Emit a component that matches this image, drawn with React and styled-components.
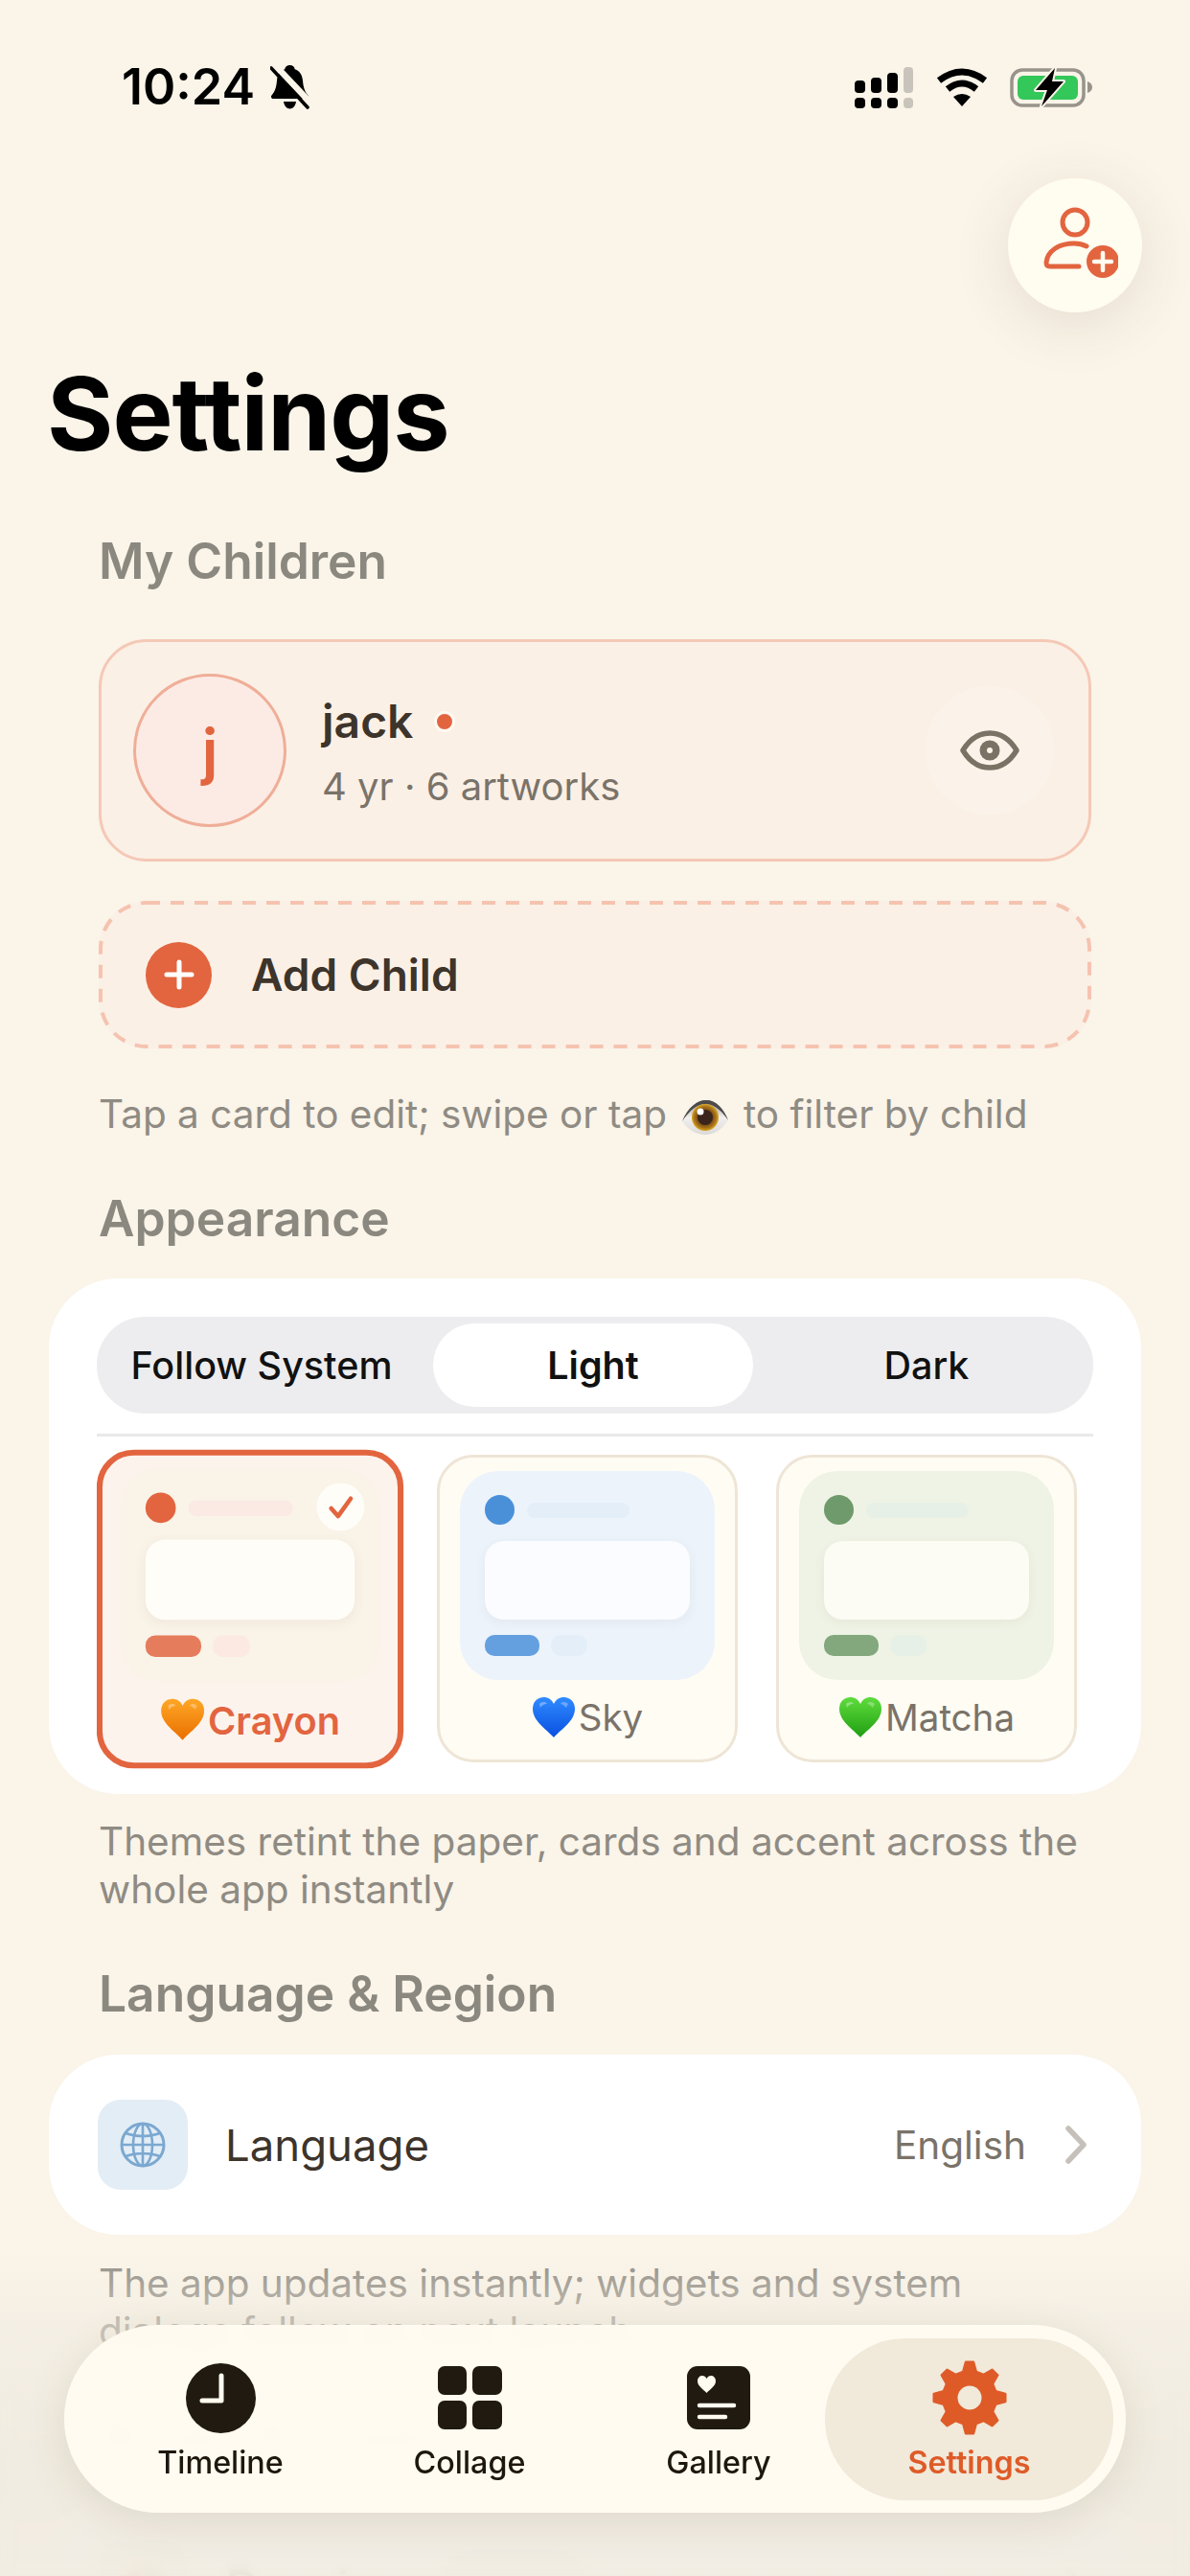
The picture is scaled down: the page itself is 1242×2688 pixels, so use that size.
import React from "react";
import styled, { createGlobalStyle } from "styled-components";

const GlobalStyle = createGlobalStyle`
  html, body {
    margin: 0;
    padding: 0;
    background: #faf4e9;
  }
  * {
    box-sizing: border-box;
  }
`;

const FONT = `Inter, "Noto Sans", "Liberation Sans", sans-serif`;

const themes = [
  {
    name: "Crayon",
    heart: ["#ffa726", "#e96f00"],
    outer: "#fdf3ed",
    preview: "#faf3e8",
    dot: "#e2653f",
    bar: "#fbeae3",
    card: "#fffdf8",
    pill: "#e57c5c",
    soft: "#fbe9e2",
    selected: true,
  },
  {
    name: "Sky",
    heart: ["#2f8bff", "#0a4fe0"],
    outer: "#fffcf4",
    preview: "#ecf3fb",
    dot: "#4a90d9",
    bar: "#e4eef8",
    card: "#fafcff",
    pill: "#64a0e0",
    soft: "#e4eef8",
  },
  {
    name: "Matcha",
    heart: ["#5fdc3c", "#1f9e12"],
    outer: "#fffcf4",
    preview: "#eff3e5",
    dot: "#6f9a6b",
    bar: "#e6f0e6",
    card: "#fcfcf5",
    pill: "#83a87e",
    soft: "#e6f0e6",
  },
];

const Screen = styled.div`
  position: relative;
  width: 1242px;
  height: 2688px;
  overflow: hidden;
  background: #faf4e9;
  font-family: ${FONT};
`;

const StatusBar = styled.div`
  height: 130px;
  padding: 66px 100px 0 127px;
  display: flex;
  justify-content: space-between;
  align-items: flex-start;
`;

const StatusLeft = styled.div`
  display: flex;
  align-items: center;
  gap: 16px;
`;

const Time = styled.span`
  font-size: 52px;
  line-height: 50px;
  font-weight: 600;
  color: #000;
`;

const StatusRight = styled.div`
  display: flex;
  align-items: flex-start;
  gap: 23px;
  padding-top: 4px;
`;

const Content = styled.div`
  padding: 0 51px;
`;

const HeaderActions = styled.div`
  display: flex;
  justify-content: flex-end;
  margin-top: 56px;
`;

const AddButton = styled.button`
  width: 140px;
  height: 140px;
  margin-right: -1px;
  border: none;
  padding: 0;
  border-radius: 50%;
  background: #fffcf0;
  box-shadow: 0 12px 60px rgba(110, 85, 50, 0.14);
  display: flex;
  align-items: center;
  justify-content: center;
`;

const Title = styled.h1`
  margin: 46px 0 0 -2px;
  font-size: 106px;
  line-height: 120px;
  font-weight: 700;
  letter-spacing: -1px;
  color: #000;
`;

const Indent = styled.div`
  padding: 0 52px;
`;

const SectionLabel = styled.h2`
  margin: ${(p) => p.$top}px 0 0;
  padding-left: 52px;
  font-size: 51.5px;
  line-height: 64px;
  font-weight: 600;
  color: #8b8880;
`;

const ChildCard = styled.div`
  margin-top: 50px;
  height: 232px;
  padding: 0 36px 0 33px;
  border: 3px solid #f5c8b6;
  border-radius: 50px;
  background: #fbf0e6;
  display: flex;
  align-items: center;
`;

const Avatar = styled.div`
  width: 160px;
  height: 160px;
  flex: none;
  border-radius: 50%;
  border: 3px solid #efae98;
  background: #fcebe4;
  color: #e2653f;
  font-size: 64px;
  font-weight: 600;
  display: flex;
  align-items: center;
  justify-content: center;
`;

const ChildInfo = styled.div`
  flex: 1;
  margin-left: 37px;
  padding-top: 2px;
`;

const ChildName = styled.div`
  display: flex;
  align-items: center;
  gap: 22px;
  font-size: 48px;
  line-height: 60px;
  font-weight: 600;
  color: #3d342b;
`;

const ActiveDot = styled.span`
  width: 22px;
  height: 22px;
  border-radius: 50%;
  background: #e2653f;
  border: 3px solid #fffaf3;
`;

const ChildMeta = styled.div`
  margin-top: 13px;
  font-size: 40px;
  line-height: 50px;
  color: #7a7369;
`;

const EyeButton = styled.div`
  width: 134px;
  height: 134px;
  border-radius: 50%;
  background: #fbf3e9;
  display: flex;
  align-items: center;
  justify-content: center;
`;

const AddChild = styled.div`
  position: relative;
  margin-top: 41px;
  height: 154px;
  padding-left: 49px;
  border-radius: 50px;
  background: #fbf0e6;
  display: flex;
  align-items: center;
  gap: 41px;
  font-size: 46px;
  font-weight: 600;
  color: #3d342b;
`;

const DashedOutline = styled.svg`
  position: absolute;
  inset: 0;
  width: 100%;
  height: 100%;
`;

const PlusBadge = styled.span`
  width: 69px;
  height: 69px;
  border-radius: 50%;
  background: #e2653f;
  display: flex;
  align-items: center;
  justify-content: center;
`;

const Hint = styled.p`
  margin: ${(p) => p.$top}px 0 0;
  padding-left: ${(p) => (p.$flush ? 0 : 52)}px;
  font-size: 40.5px;
  line-height: 50px;
  color: #8f8b83;
`;

const InlineEmoji = styled.svg`
  vertical-align: -8px;
  margin: 0 15px;
`;

const WhiteCard = styled.div`
  margin-top: ${(p) => p.$top}px;
  background: #fff;
  border-radius: 72px;
`;

const AppearanceBody = styled.div`
  height: 538px;
  padding: 40px 50px 0;
`;

const Segment = styled.div`
  height: 101px;
  padding: 7px 6px;
  border-radius: 50px;
  background: #ededef;
  display: grid;
  grid-template-columns: 332px 360px 1fr;
`;

const SegmentItem = styled.div`
  margin: 0 ${(p) => (p.$active ? 13 : 0)}px;
  border-radius: 44px;
  background: ${(p) => (p.$active ? "#fff" : "transparent")};
  font-size: 39.5px;
  font-weight: ${(p) => (p.$active ? 600 : 500)};
  color: #111;
  white-space: nowrap;
  display: flex;
  align-items: center;
  justify-content: center;
`;

const Divider = styled.div`
  margin-top: 21px;
  height: 3px;
  background: #e9e9e9;
`;

const ThemeRow = styled.div`
  margin-top: 19px;
  padding-left: 3px;
  display: flex;
  gap: 40px;
  clip-path: inset(-12px 0 -12px 0);
`;

const ThemeCard = styled.div`
  width: 314px;
  height: ${(p) => (p.$selected ? 326 : 321)}px;
  flex: none;
  margin: ${(p) => (p.$selected ? "-2px -2px -3px 0" : 0)};
  padding: ${(p) => (p.$selected ? "13px 18px 0" : "14px 21px 0")};
  border: ${(p) => (p.$selected ? "6px solid #e2653f" : "3px solid #eee5d6")};
  border-radius: 38px;
  background: ${(p) => p.$bg};
  transform: ${(p) => (p.$selected ? "scale(1.02)" : "none")};
`;

const Preview = styled.div`
  position: relative;
  height: 218px;
  padding: 25px 26px 0;
  border-radius: 40px;
  background: ${(p) => p.$bg};
`;

const PreviewTop = styled.div`
  display: flex;
  align-items: center;
  gap: 13px;
`;

const PreviewDot = styled.div`
  width: 31px;
  height: 31px;
  border-radius: 50%;
  background: ${(p) => p.$bg};
`;

const PreviewBar = styled.div`
  width: 107px;
  height: 16px;
  border-radius: 8px;
  background: ${(p) => p.$bg};
`;

const PreviewCard = styled.div`
  margin-top: 17px;
  width: 214px;
  height: 82px;
  border-radius: 20px;
  background: ${(p) => p.$bg};
  box-shadow: 0 3px 12px rgba(90, 70, 40, 0.06);
`;

const PreviewPills = styled.div`
  margin-top: 16px;
  display: flex;
  gap: 12px;
`;

const PreviewPill = styled.div`
  width: ${(p) => p.$w}px;
  height: 22px;
  border-radius: 10px;
  background: ${(p) => p.$bg};
`;

const CheckBadge = styled.div`
  position: absolute;
  top: 15px;
  right: 16px;
  width: 49px;
  height: 49px;
  border-radius: 50%;
  background: #fffdf8;
  display: flex;
  align-items: center;
  justify-content: center;
`;

const ThemeLabel = styled.div`
  height: 78px;
  display: flex;
  align-items: center;
  justify-content: center;
  gap: 3px;
  font-size: ${(p) => (p.$selected ? 39 : 38.5)}px;
  font-weight: ${(p) => (p.$selected ? 600 : 400)};
  color: ${(p) => (p.$selected ? "#e2653f" : "#7a7369")};
`;

const SettingRow = styled.div`
  height: 188px;
  padding: 0 57px 0 51px;
  display: flex;
  align-items: center;
`;

const RowIcon = styled.div`
  width: 94px;
  height: 94px;
  flex: none;
  border-radius: 24px;
  background: ${(p) => p.$bg};
  display: flex;
  align-items: center;
  justify-content: center;
`;

const RowTitle = styled.div`
  flex: 1;
  margin-left: 39px;
  font-size: 45.5px;
  color: #3d342b;
`;

const RowValue = styled.div`
  font-size: 40.5px;
  color: #7a7369;
`;

const RowChevron = styled.svg`
  margin-left: 41px;
`;

const GhostPill = styled.div`
  width: 152px;
  height: 76px;
  margin-right: auto;
  border-radius: 38px;
  background: #efe9df;
`;

const GhostName = styled.div`
  margin: 0 40px;
  font-size: 46px;
  font-weight: 600;
  color: #3d342b;
`;

const BottomFade = styled.div`
  position: absolute;
  left: 0;
  right: 0;
  bottom: 0;
  height: 340px;
  background: linear-gradient(
    rgba(240, 235, 224, 0),
    rgba(240, 235, 224, 0.55) 22%,
    rgba(240, 235, 224, 0.9) 62%,
    rgba(241, 236, 226, 0.94)
  );
`;

const BottomBlur = styled.div`
  position: absolute;
  left: 0;
  right: 0;
  bottom: 0;
  height: 190px;
  backdrop-filter: blur(7px);
`;

const TabBar = styled.nav`
  position: absolute;
  left: 67px;
  top: 2426px;
  width: 1108px;
  height: 196px;
  padding: 14px 13px 13px 33px;
  border-radius: 98px;
  background: rgba(255, 251, 240, 0.965);
  backdrop-filter: blur(9px);
  box-shadow: 0 10px 44px rgba(90, 70, 40, 0.12);
  display: flex;
`;

const Tab = styled.div`
  width: ${(p) => (p.$active ? 301 : 260)}px;
  margin-left: ${(p) => (p.$active ? -19 : 0)}px;
  flex: none;
  padding-top: 24px;
  border-radius: 84px;
  background: ${(p) => (p.$active ? "#f1e9da" : "transparent")};
  color: ${(p) => (p.$active ? "#de5b28" : "#1d170e")};
  display: flex;
  flex-direction: column;
  align-items: center;
`;

const TabIcon = styled.div`
  height: 76px;
  display: flex;
  align-items: center;
  justify-content: center;
`;

const TabLabel = styled.div`
  margin-top: 10px;
  font-size: 32.3px;
  line-height: 40px;
  font-weight: ${(p) => (p.$active ? 600 : 500)};
`;

// status bar glyphs
const Bell = () => (
  <svg width="41" height="46" viewBox="0 0 41 46">
    <path
      d="M20.5 0c3 0 5 2 5.200 4.200C31 6 33.500 10.500 34 16c.5 6 1.500 11 5.500 15.500 1.200 1.500.2 3.500-1.700 3.500H3.200c-1.900 0-2.900-2-1.700-3.500C5.500 27 6.500 22 7 16c.5-5.500 3-10 8.300-11.800C15.500 2 17.500 0 20.500 0z"
      fill="#000"
    />
    <path d="M14 38h13c-.5 4-3 7.500-6.500 7.500S14.500 42 14 38z" fill="#000" />
    <path d="M5 0L42 39" stroke="#faf4e9" strokeWidth="6.500" />
    <path d="M1 3l38 41" stroke="#000" strokeWidth="3.600" strokeLinecap="round" />
  </svg>
);

const Signal = () => (
  <svg width="62" height="44" viewBox="0 0 62 44" fill="#000">
    <rect x="0" y="14" width="11" height="13" rx="4" />
    <rect x="17" y="11" width="11" height="16" rx="4" />
    <rect x="34" y="6" width="11" height="21" rx="4" />
    <rect x="51" y="0" width="10" height="27" rx="4" fill="#c9c4bb" />
    <rect x="0" y="32" width="11" height="11" rx="4" />
    <rect x="17" y="32" width="11" height="11" rx="4" />
    <rect x="34" y="32" width="11" height="11" rx="4" />
    <rect x="51" y="32" width="10" height="11" rx="4" fill="#c9c4bb" />
  </svg>
);

const Wifi = () => (
  <svg width="54" height="42" viewBox="0 0 54 42" fill="none" stroke="#000">
    <path d="M3 14Q27 -4 51 14" strokeWidth="7" />
    <path d="M12 23Q27 11 42 23" strokeWidth="7" />
    <path d="M18 31Q27 25 36 31L27 41z" fill="#000" stroke="none" />
  </svg>
);

const Battery = () => (
  <svg width="88" height="42" viewBox="0 0 88 42">
    <rect x="2" y="3" width="75" height="37" rx="11" fill="none" stroke="#98948b" strokeWidth="3.500" />
    <rect x="8" y="9" width="63" height="25" rx="6" fill="#34c759" />
    <path d="M81 15c3 1 5 3 5 6s-2 5-5 6z" fill="#98948b" />
    <path
      d="M47 1L27 24h12l-6 17 23-26H44z"
      fill="#000"
      stroke="#faf4e9"
      strokeWidth="4"
      paintOrder="stroke"
      strokeLinejoin="round"
    />
  </svg>
);

const PersonAdd = () => (
  <svg width="90" height="80" viewBox="-8 0 90 80" fill="none">
    <circle cx="37" cy="16" r="13" stroke="#e2653f" strokeWidth="5" />
    <path
      d="M49 41c-4-2-8-3-13-3C20 38 8 46 7 58c0 3 1 4 4 4h30"
      stroke="#e2653f"
      strokeWidth="5"
      strokeLinecap="round"
    />
    <circle cx="66" cy="57" r="17" fill="#e2653f" />
    <path d="M66 48v18M57 57h18" stroke="#fffcf0" strokeWidth="4.500" strokeLinecap="round" />
  </svg>
);

const EyeOutline = () => (
  <svg width="62" height="42" viewBox="0 0 62 42" fill="none">
    <path
      d="M3 21C12 6 22 3 31 3s19 3 28 18c-9 15-19 18-28 18S12 36 3 21z"
      stroke="#7a7365"
      strokeWidth="5.500"
      strokeLinejoin="round"
    />
    <circle cx="31" cy="21" r="10.500" fill="#7a7365" />
    <circle cx="31" cy="21" r="3" fill="#fbf3e9" />
  </svg>
);

const EyeEmoji = () => (
  <InlineEmoji width="50" height="38" viewBox="0 0 50 38">
    <defs>
      <radialGradient id="iris" cx="50%" cy="50%" r="50%">
        <stop offset="45%" stopColor="#6b3d12" />
        <stop offset="80%" stopColor="#a8741a" />
        <stop offset="100%" stopColor="#d9a520" />
      </radialGradient>
      <linearGradient id="sclera" x1="0" y1="0" x2="0" y2="1">
        <stop offset="0" stopColor="#8d8a8a" />
        <stop offset="0.5" stopColor="#f2f0ee" />
        <stop offset="1" stopColor="#dcdad8" />
      </linearGradient>
    </defs>
    <path d="M1 23C7 8 17 1 26 1c10 0 18 8 23 21-7 10-15 15-24 15S7 32 1 23z" fill="url(#sclera)" />
    <path d="M1 23C7 8 17 1 26 1c10 0 18 8 23 21-9-13-16-17-24-17S9 11 1 23z" fill="#4d4a4a" />
    <circle cx="25" cy="19" r="14" fill="url(#iris)" />
    <circle cx="25" cy="19" r="8" fill="#3a241c" />
    <circle cx="20" cy="13" r="3.500" fill="#fff" />
  </InlineEmoji>
);

const Heart = ({ id, colors }) => (
  <svg width="46" height="44" viewBox="0 0 46 44">
    <defs>
      <linearGradient id={id} x1="0" y1="0" x2="0" y2="1">
        <stop offset="0" stopColor={colors[0]} />
        <stop offset="1" stopColor={colors[1]} />
      </linearGradient>
    </defs>
    <path
      d="M23 43C15 34 1 26 1 13 1 6 6 1 12.500 1 17 1 21 3.500 23 8c2-4.500 6-7 10.500-7C40 1 45 6 45 13c0 13-14 21-22 30z"
      fill={`url(#${id})`}
    />
    <path d="M8 8c2-2 6-3 8 0-3 0-5 1-7 4z" fill="#fff" opacity="0.35" />
    <path d="M30 8c2-3 6-2 8 0-1 2-2 3-2 4-2-2-4-4-6-4z" fill="#fff" opacity="0.3" />
  </svg>
);

const Globe = () => (
  <svg width="48" height="48" viewBox="0 0 48 48" fill="none" stroke="#7ba8d0" strokeWidth="2.600">
    <circle cx="24" cy="24" r="22" strokeWidth="3" />
    <ellipse cx="24" cy="24" rx="10" ry="22" />
    <path d="M24 2v44M2 24h44M6 12c11 4 25 4 36 0M6 36c11-4 25-4 36 0" />
  </svg>
);

const Chevron = () => (
  <RowChevron width="22" height="40" viewBox="0 0 22 40" fill="none">
    <path d="M3 3l16 17L3 37" stroke="#c5c1ba" strokeWidth="5.500" strokeLinecap="round" strokeLinejoin="round" />
  </RowChevron>
);

const Palette = () => (
  <svg width="54" height="54" viewBox="0 0 54 54">
    <circle cx="27" cy="27" r="26" fill="#e9c98f" />
    <circle cx="18" cy="18" r="7" fill="#e2653f" />
    <circle cx="36" cy="16" r="7" fill="#6bbf59" />
    <circle cx="40" cy="32" r="7" fill="#4a90d9" />
  </svg>
);

const ClockIcon = () => (
  <svg width="73" height="73" viewBox="0 0 73 73">
    <circle cx="36.500" cy="36.500" r="36.500" fill="#201a10" />
    <path
      d="M37 13v26H17"
      fill="none"
      stroke="#fffbf0"
      strokeWidth="5"
      strokeLinecap="round"
      strokeLinejoin="round"
    />
  </svg>
);

const GridIcon = () => (
  <svg width="67" height="66" viewBox="0 0 67 66" fill="#201a10">
    <rect x="0" y="0" width="30" height="30" rx="7" />
    <rect x="36" y="0" width="31" height="30" rx="7" />
    <rect x="0" y="36" width="30" height="30" rx="7" />
    <rect x="36" y="36" width="31" height="30" rx="7" />
  </svg>
);

const GalleryIcon = () => (
  <svg width="66" height="66" viewBox="0 0 66 66">
    <rect width="66" height="66" rx="11" fill="#201a10" />
    <path
      d="M20.500 28C17 24 11 21 11 15.500 11 12 13.500 10 16 10c2 0 3.500 1 4.500 3 1-2 2.500-3 4.500-3 2.500 0 5 2 5 5.500C30 21 24 24 20.500 28z"
      fill="#fffbf0"
    />
    <path d="M13 41h36M13 53h27" stroke="#fffbf0" strokeWidth="4.500" strokeLinecap="round" />
  </svg>
);

// 8 toothed gear, the hole is painted in the pill colour
const gearPath = (() => {
  const pts = [];
  const teeth = 8;
  for (let i = 0; i < teeth; i++) {
    const a = (i / teeth) * Math.PI * 2 - Math.PI / 2;
    const step = (Math.PI * 2) / teeth;
    [
      [28, -0.5],
      [37.5, -0.22],
      [37.5, 0.22],
      [28, 0.5],
    ].forEach(([r, k]) => {
      const t = a + k * step * 0.62;
      pts.push(`${(39 + r * Math.cos(t)).toFixed(2)} ${(39 + r * Math.sin(t)).toFixed(2)}`);
    });
  }
  return `M${pts.join("L")}Z`;
})();

const GearIcon = () => (
  <svg width="78" height="78" viewBox="0 0 78 78">
    <path d={gearPath} fill="#de5b28" stroke="#de5b28" strokeWidth="2.500" strokeLinejoin="round" />
    <circle cx="39" cy="39" r="12.500" fill="#f1e9da" />
  </svg>
);

const tabs = [
  { label: "Timeline", icon: <ClockIcon /> },
  { label: "Collage", icon: <GridIcon /> },
  { label: "Gallery", icon: <GalleryIcon /> },
  { label: "Settings", icon: <GearIcon />, active: true },
];

function ThemeTile({ theme }) {
  return (
    <ThemeCard $selected={theme.selected} $bg={theme.outer}>
      <Preview $bg={theme.preview}>
        <PreviewTop>
          <PreviewDot $bg={theme.dot} />
          <PreviewBar $bg={theme.bar} />
        </PreviewTop>
        <PreviewCard $bg={theme.card} />
        <PreviewPills>
          <PreviewPill $w={57} $bg={theme.pill} />
          <PreviewPill $w={38} $bg={theme.soft} />
        </PreviewPills>
        {theme.selected && (
          <CheckBadge>
            <svg width="26" height="24" viewBox="0 0 26 24" fill="none">
              <path d="M3 13l7 8L23 3" stroke="#e2653f" strokeWidth="4.500" strokeLinecap="round" strokeLinejoin="round" />
            </svg>
          </CheckBadge>
        )}
      </Preview>
      <ThemeLabel $selected={theme.selected}>
        <Heart id={`heart-${theme.name}`} colors={theme.heart} />
        {theme.name}
      </ThemeLabel>
    </ThemeCard>
  );
}

export default function App() {
  return (
    <Screen>
      <GlobalStyle />
      <StatusBar>
        <StatusLeft>
          <Time>10:24</Time>
          <Bell />
        </StatusLeft>
        <StatusRight>
          <Signal />
          <Wifi />
          <Battery />
        </StatusRight>
      </StatusBar>

      <Content>
        <HeaderActions>
          <AddButton>
            <PersonAdd />
          </AddButton>
        </HeaderActions>
        <Title>Settings</Title>

        <SectionLabel $top={61}>My Children</SectionLabel>
        <Indent>
          <ChildCard>
            <Avatar>j</Avatar>
            <ChildInfo>
              <ChildName>
                jack
                <ActiveDot />
              </ChildName>
              <ChildMeta>4 yr · 6 artworks</ChildMeta>
            </ChildInfo>
            <EyeButton>
              <EyeOutline />
            </EyeButton>
          </ChildCard>
          <AddChild>
            <DashedOutline>
              <rect
                x="2"
                y="2"
                width="1032"
                height="150"
                rx="48"
                fill="none"
                stroke="#f5c3b0"
                strokeWidth="4"
                strokeDasharray="14 11"
              />
            </DashedOutline>
            <PlusBadge>
              <svg width="32" height="32" viewBox="0 0 32 32">
                <path d="M16 3v26M3 16h26" stroke="#fff" strokeWidth="5" strokeLinecap="round" />
              </svg>
            </PlusBadge>
            Add Child
          </AddChild>
          <Hint $flush $top={44}>
            Tap a card to edit; swipe or tap
            <EyeEmoji />
            to filter by child
          </Hint>
        </Indent>

        <SectionLabel $top={51}>Appearance</SectionLabel>
        <WhiteCard $top={31}>
          <AppearanceBody>
            <Segment>
              <SegmentItem>Follow System</SegmentItem>
              <SegmentItem $active>Light</SegmentItem>
              <SegmentItem>Dark</SegmentItem>
            </Segment>
            <Divider />
            <ThemeRow>
              {themes.map((theme) => (
                <ThemeTile key={theme.name} theme={theme} />
              ))}
            </ThemeRow>
          </AppearanceBody>
        </WhiteCard>
        <Hint $top={25}>
          Themes retint the paper, cards and accent across the
          <br />
          whole app instantly
        </Hint>

        <SectionLabel $top={51}>Language &amp; Region</SectionLabel>
        <WhiteCard $top={32}>
          <SettingRow>
            <RowIcon $bg="#e3edf6">
              <Globe />
            </RowIcon>
            <RowTitle>Language</RowTitle>
            <RowValue>English</RowValue>
            <Chevron />
          </SettingRow>
        </WhiteCard>
        <Hint $top={26}>
          The app updates instantly; widgets and system
          <br />
          dialogs follow on next launch
        </Hint>

        <SectionLabel $top={50}>Artwork Types</SectionLabel>
        <WhiteCard $top={32}>
          <SettingRow>
            <RowIcon $bg="#f3efe6">
              <Palette />
            </RowIcon>
            <GhostName>Drawing</GhostName>
            <GhostPill />
            <Chevron />
          </SettingRow>
        </WhiteCard>
      </Content>

      <BottomFade />
      <BottomBlur />
      <TabBar>
        {tabs.map((tab) => (
          <Tab key={tab.label} $active={tab.active}>
            <TabIcon>{tab.icon}</TabIcon>
            <TabLabel $active={tab.active}>{tab.label}</TabLabel>
          </Tab>
        ))}
      </TabBar>
    </Screen>
  );
}
